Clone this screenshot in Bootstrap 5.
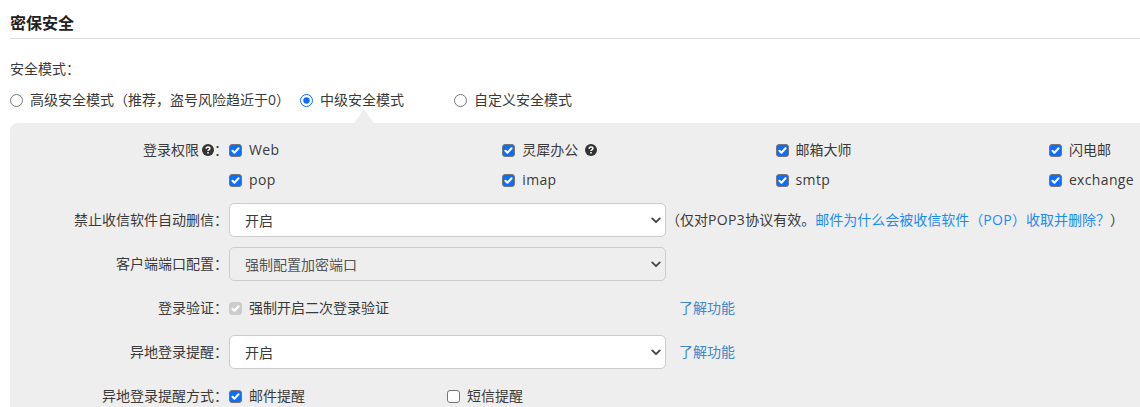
<!DOCTYPE html>
<html lang="zh-CN">
<head>
<meta charset="utf-8">
<title>密保安全</title>
<link href="https://cdn.jsdelivr.net/npm/bootstrap@5.3.0/dist/css/bootstrap.min.css" rel="stylesheet">
<style>
html,body{height:407px;overflow:hidden;background:#fff}
body{font-family:"Open Sans","Noto Sans CJK SC",sans-serif;font-size:14px;color:#3a3a3a;line-height:20px}
.sec-title{font-size:16px;font-weight:700;line-height:22px;color:#222;margin:0 0 0 10px;padding:12px 0 4px;border-bottom:1px solid #ddd}
.mode-label{margin:20px 0 0 10px;height:20px}
.mode-row{margin:11px 0 0 10px;height:20px}
.mode-item{display:flex;align-items:center}
.mode-a{width:290px}.mode-b{width:154px}
.form-check-input{width:13px;height:13px;margin:0 7px 0 0;flex:none;--bs-form-check-bg:#fff}
.form-check-input[type=radio]{border-color:#767676}
.form-check-input:checked[type=radio]{background-color:#fff;border-color:#0d6efd;--bs-form-check-bg-image:url("data:image/svg+xml,%3csvg xmlns='http://www.w3.org/2000/svg' viewBox='-4 -4 8 8'%3e%3ccircle r='2.300' fill='%230d6efd'/%3e%3c/svg%3e")}
.form-check-input[type=checkbox]{border-radius:3px;border-color:#767676}
.form-check-input:checked[type=checkbox]{--bs-form-check-bg-image:url("data:image/svg+xml,%3csvg xmlns='http://www.w3.org/2000/svg' viewBox='0 0 20 20'%3e%3cpath fill='none' stroke='%23fff' stroke-linecap='round' stroke-linejoin='round' stroke-width='3.800' d='m4.500 10.500 3.500 3.500 7.500-8'/%3e%3c/svg%3e")}
.form-check-input:disabled{opacity:1;background-color:#ccc;border-color:#ccc}
.pane{position:relative;margin:13px 0 0 10px;width:1180px;height:300px;background:#eee;border-radius:8px 0 0 0;padding-top:12px}
.pane-tip{position:absolute;left:344px;top:-14px;width:0;height:0;border-left:10px solid transparent;border-right:10px solid transparent;border-bottom:14px solid #eee}
.frow{display:flex;align-items:center}
.flabel{width:218px;text-align:right;flex:none;white-space:nowrap}
.fbody{margin-left:1px;display:flex;align-items:center;white-space:nowrap}
.cell{width:273.300px;display:flex;align-items:center}
.cell-s{width:218px;display:flex;align-items:center}
.lat{letter-spacing:.35px}
.h30{height:30px}
.sel{width:437px;height:34px;font-size:14px;color:#3a3a3a;padding:2px 30px 0 15px;border:1px solid #ccc;border-radius:5px;line-height:20px;--bs-form-select-bg-img:url("data:image/svg+xml,%3csvg xmlns='http://www.w3.org/2000/svg' viewBox='0 0 12 8'%3e%3cpath fill='none' stroke='%23444' stroke-width='2.200' stroke-linecap='round' stroke-linejoin='round' d='m1.500 1.500 4.500 4.500 4.500-4.500'/%3e%3c/svg%3e");background-position:right 4px center;background-size:10px 7px;font-family:inherit;box-shadow:none}
.sel:disabled{background-color:#eee;color:#555}
.qmark{flex:none;margin-left:3px;vertical-align:-1px}
.qmark-b{margin-left:7px}
.lnk{color:#1e8af5;text-decoration:none}
.lnk2{color:#3f87c9;text-decoration:none;margin-left:13px}
.gap-sel{margin-top:10px}
.tall{height:54px}
.vbox{width:437px}
</style>
</head>
<body>
<h5 class="sec-title">密保安全</h5>
<div class="mode-label">安全模式：</div>
<div class="mode-row d-flex">
  <label class="mode-item mode-a"><input class="form-check-input" type="radio" name="m">高级安全模式（推荐，盗号风险趋近于0）</label>
  <label class="mode-item mode-b"><input class="form-check-input" type="radio" name="m" checked>中级安全模式</label>
  <label class="mode-item"><input class="form-check-input" type="radio" name="m">自定义安全模式</label>
</div>
<div class="pane">
  <span class="pane-tip"></span>
  <div class="frow h30">
    <div class="flabel">登录权限<svg class="qmark" width="12" height="12" viewBox="0 0 12 12"><circle cx="6" cy="6" r="6" fill="#333"/><path d="M4.100 4.700c0-1.100.8-1.800 1.900-1.800s1.900.7 1.900 1.600c0 1.200-1.900 1.300-1.900 2.400" fill="none" stroke="#fff" stroke-width="1.500"/><rect x="5.200" y="8" width="1.600" height="1.500" fill="#fff"/></svg>：</div>
    <div class="fbody">
      <label class="cell"><input class="form-check-input" type="checkbox" checked><span class="lat">Web</span></label>
      <label class="cell"><input class="form-check-input" type="checkbox" checked>灵犀办公<svg class="qmark qmark-b" width="12" height="12" viewBox="0 0 12 12"><circle cx="6" cy="6" r="6" fill="#333"/><path d="M4.100 4.700c0-1.100.8-1.800 1.900-1.800s1.900.7 1.900 1.600c0 1.200-1.900 1.300-1.900 2.400" fill="none" stroke="#fff" stroke-width="1.500"/><rect x="5.200" y="8" width="1.600" height="1.500" fill="#fff"/></svg></label>
      <label class="cell"><input class="form-check-input" type="checkbox" checked>邮箱大师</label>
      <label class="cell"><input class="form-check-input" type="checkbox" checked>闪电邮</label>
    </div>
  </div>
  <div class="frow h30">
    <div class="flabel"></div>
    <div class="fbody">
      <label class="cell"><input class="form-check-input" type="checkbox" checked><span class="lat">pop</span></label>
      <label class="cell"><input class="form-check-input" type="checkbox" checked><span class="lat">imap</span></label>
      <label class="cell"><input class="form-check-input" type="checkbox" checked><span class="lat">smtp</span></label>
      <label class="cell"><input class="form-check-input" type="checkbox" checked><span class="lat">exchange</span></label>
    </div>
  </div>
  <div class="frow mt-2">
    <div class="flabel">禁止收信软件自动删信：</div>
    <div class="fbody">
      <select class="form-select sel"><option>开启</option></select>
      <span>（仅对<span class="lat">POP3</span>协议有效。<a class="lnk" href="#">邮件为什么会被收信软件（<span class="lat">POP</span>）收取并删除？</a>）</span>
    </div>
  </div>
  <div class="frow gap-sel">
    <div class="flabel">客户端端口配置：</div>
    <div class="fbody"><select class="form-select sel" disabled><option>强制配置加密端口</option></select></div>
  </div>
  <div class="frow tall">
    <div class="flabel">登录验证：</div>
    <div class="fbody">
      <label class="d-flex align-items-center vbox"><input class="form-check-input" type="checkbox" checked disabled>强制开启二次登录验证</label>
      <a class="lnk2" href="#">了解功能</a>
    </div>
  </div>
  <div class="frow">
    <div class="flabel">异地登录提醒：</div>
    <div class="fbody">
      <select class="form-select sel"><option>开启</option></select>
      <a class="lnk2" href="#">了解功能</a>
    </div>
  </div>
  <div class="frow tall">
    <div class="flabel">异地登录提醒方式：</div>
    <div class="fbody">
      <label class="cell-s"><input class="form-check-input" type="checkbox" checked>邮件提醒</label>
      <label class="cell-s"><input class="form-check-input" type="checkbox">短信提醒</label>
    </div>
  </div>
</div>
<script src="https://cdn.jsdelivr.net/npm/bootstrap@5.3.0/dist/js/bootstrap.bundle.min.js"></script>
</body>
</html>
